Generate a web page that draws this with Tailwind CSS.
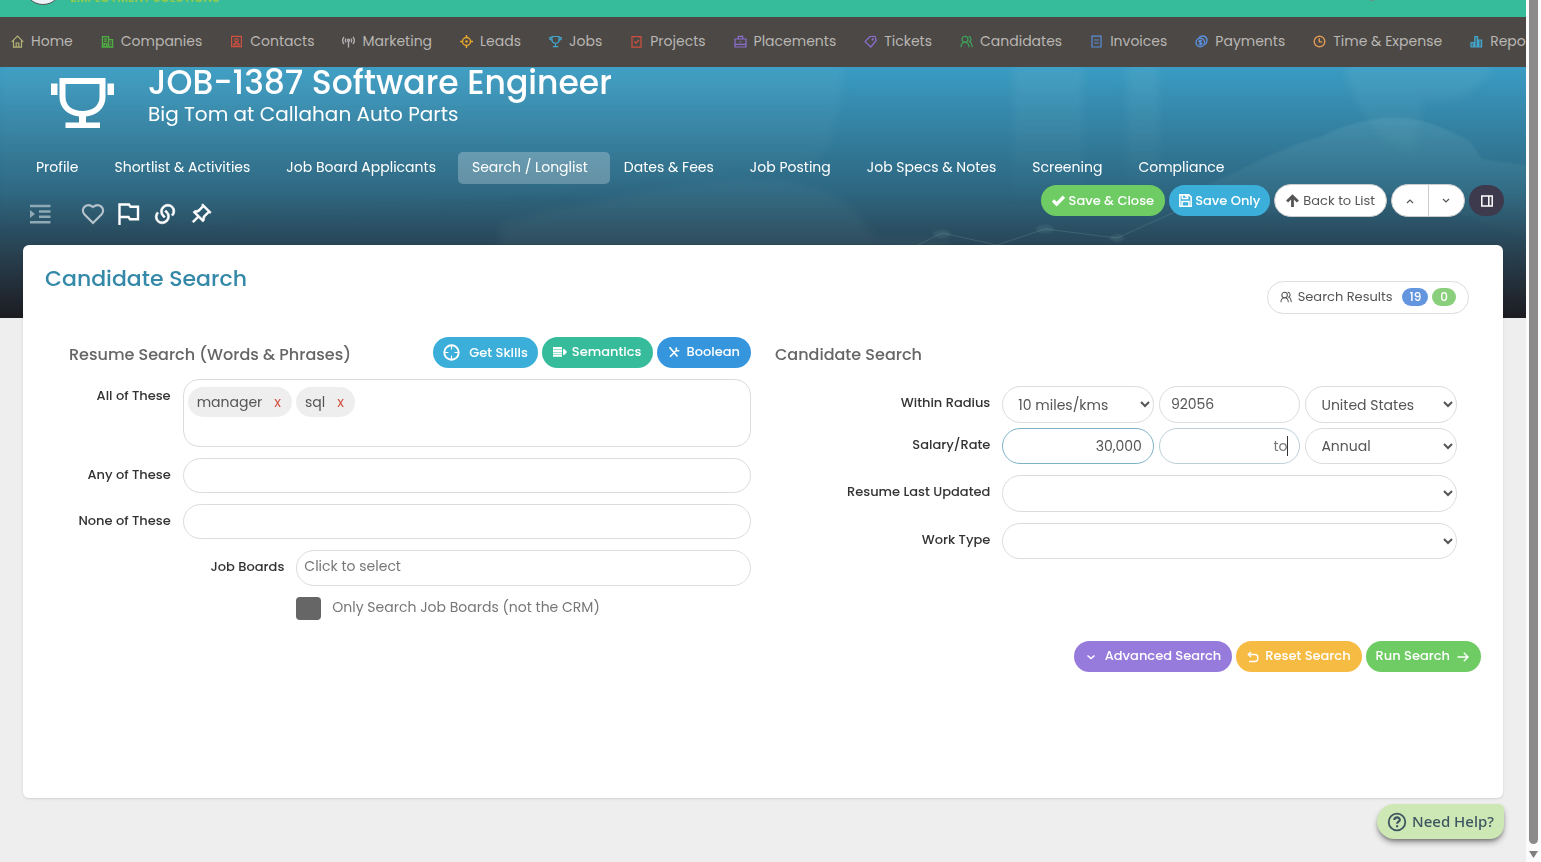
<!DOCTYPE html>
<html lang="en">
  <head>
    <meta charset="UTF-8" />
    <meta name="viewport" content="width=device-width, initial-scale=1.0" />
    <title>JOB-1387 Software Engineer</title>
    <script src="https://cdn.jsdelivr.net/npm/@tailwindcss/browser@4"></script>
  </head>
  <body class="bg-[#eeeeee] font-[Poppins,Inter,sans-serif] text-[#555555]">
    <div class="flex min-h-screen">
      <div class="relative min-w-0 flex-1">
        <!-- Top bar, mostly scrolled out of view -->
        <header class="relative h-[17px] overflow-hidden bg-[#36bc9b]">
          <div class="absolute -top-[33px] left-[24px] h-[38px] w-[38px] rounded-full border border-[#555555] bg-[#eef1f6]"></div>
          <div class="absolute -top-[10px] left-[70px] text-xs leading-4 font-semibold text-[#8fcb4f]">EMPLOYMENT SOLUTIONS</div>
          <div class="absolute -top-[9px] right-[149px] h-[10px] w-[10px] rounded-full bg-[#6b8f84]"></div>
        </header>

        <nav class="flex h-[50px] items-center gap-7 overflow-hidden bg-[#4b4845] pb-[2px] pl-[11px] text-sm whitespace-nowrap text-[#b9b6b3]">
          <a href="#" class="flex items-center gap-[7px]">
            <svg class="h-[13px] w-[13px] shrink-0 text-[#b5b276]" viewBox="0 0 13 13" fill="none" stroke="currentColor" stroke-width="1.2"><path d="M.7 6.8 6.5 1l5.8 5.8M2.5 5.5v6.7h8V5.5M5.2 12V8h2.6v4" /></svg>
            Home</a>
          <a href="#" class="flex items-center gap-[7px]">
            <svg class="h-[13px] w-[13px] shrink-0 text-[#4fae43]" viewBox="0 0 13 13" fill="none" stroke="currentColor" stroke-width="1.4"><path d="M1.5 12V1.6h6V12M7.5 4.6h4V12M.5 12h12M3.2 4h2.6M3.2 6.3h2.6M3.2 12V8.8h2.5V12M9.5 6.5v1M9.5 9v1" /></svg>
            Companies</a>
          <a href="#" class="flex items-center gap-[7px]">
            <svg class="h-[13px] w-[13px] shrink-0 text-[#d2503f]" viewBox="0 0 13 13" fill="none" stroke="currentColor" stroke-width="1.2"><path d="M1.6 1.4h9.8v10.2H1.6zM3.6 10c.3-1.8 1.5-2.2 2.9-2.2s2.6.4 2.9 2.2z" /><circle cx="6.5" cy="5.2" r="1.7" /></svg>
            Contacts</a>
          <a href="#" class="flex items-center gap-[7px]">
            <svg class="h-[13px] w-[13px] shrink-0 text-[#b0aeb0]" viewBox="0 0 13 13" fill="none" stroke="currentColor" stroke-width="1.4"><path d="M2 2C.4 4 .4 7 2 9M4 3.500c-.8 1.300-.8 2.700 0 4M11 2c1.600 2 1.600 5 0 7M9 3.500c.8 1.300.8 2.700 0 4M6.500 6v6.500" /><circle cx="6.5" cy="5.3" r="1" /></svg>
            Marketing</a>
          <a href="#" class="flex items-center gap-[7px]">
            <svg class="h-[13px] w-[13px] shrink-0 text-[#e9a62c]" viewBox="0 0 13 13" fill="none" stroke="currentColor" stroke-width="1.4"><circle cx="6.5" cy="6.5" r="4" /><circle cx="6.5" cy="6.5" r=".6" /><path d="M6.500 0v3M6.500 10v3M0 6.500h3M10 6.500h3" /></svg>
            Leads</a>
          <a href="#" class="flex items-center gap-[7px]">
            <svg class="h-[13px] w-[13px] shrink-0 text-[#43a6cd]" viewBox="0 0 13 13" fill="none" stroke="currentColor" stroke-width="1.2"><path d="M3 1.500h7v3.300a3.500 3.500 0 0 1-7 0zM3 2.600H.8v1.500L3 5.600M10 2.600h2.200v1.500L10 5.600M6.500 8.300v3M3.800 11.600h5.400" /></svg>
            Jobs</a>
          <a href="#" class="flex items-center gap-[7px]">
            <svg class="h-[13px] w-[13px] shrink-0 text-[#d2503f]" viewBox="0 0 13 13" fill="none" stroke="currentColor" stroke-width="1.2"><path d="M2 1.500h9v10.600H2zM4.300 6.500l1.700 1.700 3-3.200M4 1.500v1.300M9 1.500v1.300" /></svg>
            Projects</a>
          <a href="#" class="flex items-center gap-[7px]">
            <svg class="h-[13px] w-[13px] shrink-0 text-[#8c6fd0]" viewBox="0 0 13 13" fill="none" stroke="currentColor" stroke-width="1.2"><path d="M1 4h11v8H1zM4.300 4V1.300h4.400V4M1 9.300h11M5.500 7h2" /></svg>
            Placements</a>
          <a href="#" class="flex items-center gap-[7px]">
            <svg class="h-[13px] w-[13px] shrink-0 text-[#8c6fd0]" viewBox="0 0 13 13" fill="none" stroke="currentColor" stroke-width="1.2"><path d="M1 6.600 6 1.500l5-.2 1.200 4.200L6.800 12z" stroke-linejoin="round" /><circle cx="8.7" cy="4.4" r=".6" /></svg>
            Tickets</a>
          <a href="#" class="flex items-center gap-[7px]">
            <svg class="h-[13px] w-[13px] shrink-0 text-[#3fa45b]" viewBox="0 0 13 13" fill="none" stroke="currentColor" stroke-width="1.2"><circle cx="5" cy="4.3" r="3" /><path d="M1 12.300c0-3 1.500-5 4-5s4 2 4 5M8.500 1.300c2.800.2 3.300 4 1 5.400 1.700.7 2.600 2.600 2.700 5.600" /></svg>
            Candidates</a>
          <a href="#" class="flex items-center gap-[7px]">
            <svg class="h-[13px] w-[13px] shrink-0 text-[#5b8fdb]" viewBox="0 0 13 13" fill="none" stroke="currentColor" stroke-width="1.2"><path d="M2 1.200h9v10.800H2zM4.200 5h4.600M4.200 8h4.600" /></svg>
            Invoices</a>
          <a href="#" class="flex items-center gap-[7px]">
            <svg class="h-[13px] w-[13px] shrink-0 text-[#5b8fdb]" viewBox="0 0 13 13" fill="none" stroke="currentColor" stroke-width="1.4"><circle cx="5.3" cy="7.5" r="4.3" /><path d="M4 2.500C7-.3 12 1 12 5.500c0 2-1 3.600-2.500 4.500M7 6c-1-.8-3-.6-3 .5s3 .9 3 2-2 1.300-3 .5M5.500 5v5.500" /></svg>
            Payments</a>
          <a href="#" class="flex items-center gap-[7px]">
            <svg class="h-[13px] w-[13px] shrink-0 text-[#e09a55]" viewBox="0 0 13 13" fill="none" stroke="currentColor" stroke-width="1.4"><circle cx="6.5" cy="6.5" r="5.3" /><path d="M6.300 3.200v3.700h3" /></svg>
            Time &amp; Expense</a>
          <a href="#" class="flex items-center gap-[7px]">
            <svg class="h-[13px] w-[13px] shrink-0 text-[#43a6cd]" viewBox="0 0 13 13" fill="#43a6cd66" stroke="currentColor" stroke-width="1.2"><path d="M1 7.500h2.800V12H1zM4.800 1.500h2.800V12H4.800zM8.600 5h3v7h-3z" /></svg>
            Reports</a>
        </nav>

        <section class="relative h-[251px] bg-linear-to-b from-[#3a9cc4] via-[#2d6680] via-50% to-[#1c1c22]">
          <!-- Faint skyline, hands and network behind the title -->
          <svg class="absolute inset-0 h-full w-full" viewBox="0 0 1526 251" preserveAspectRatio="none" fill="#a7dcdc">
            <defs>
              <linearGradient id="fade" x1="0" y1="0" x2="0" y2="1">
                <stop offset="0" stop-color="#a7dcdc" />
                <stop offset="1" stop-color="#a7dcdc" stop-opacity="0" />
              </linearGradient>
            </defs>
            <g class="blur-xs">
              <path d="M0 0H843C840 60 830 90 805 100C700 110 300 160 0 170z" fill="url(#fade)" opacity=".08" />
              <path d="M1013 0h70v140h-70zM1127 0h32v130h-32zM1344 0h150c-20 30-50 40-70 30l-10 60c-40-20-60-50-70-90z" fill="url(#fade)" opacity=".1" />
              <path d="M500 155c100-20 240-60 310-35 40 10 50 30 65 50l75 2v10H500z" opacity=".05" />
            </g>
            <path class="blur-[1px]" d="M1190 125c50-20 90-45 130-55 30-16 80-30 125-8l25 12 12 18 44 6v80c-90-50-160-60-210-50-40 30-90 20-126 3z" fill="url(#fade)" opacity=".12" />
            <g fill="none" stroke="#a7dcdc" opacity=".16"><path d="M910 182l32-16 55 12 48-16 72 9 80-36" /></g>
            <g class="blur-[1px]" opacity=".1"><ellipse cx="942" cy="167" rx="9" ry="4" /><ellipse cx="1117" cy="171" rx="7" ry="4" /><ellipse cx="1045" cy="162" rx="9" ry="4" /></g>
          </svg>

          <div class="relative flex items-start gap-[34px] pl-[51px]">
            <svg class="mt-[10px] h-[52px] w-[63px]" viewBox="0 0 63 52" fill="white">
              <path d="M8.500 1H54.500V20C54.500 31 46 38.500 35 39.500V45.500H49V51H14.500V45.500H28V39.500C17 38.500 8.500 31 8.500 20zM14.500 7V20C14.500 29 22 34 31.500 34S48.500 29 48.500 20V7z" fill-rule="evenodd" />
              <path d="M0 6.500h6.500V18H0zM56.500 6.500H63V18h-6.500z" />
            </svg>
            <div class="text-white">
              <h1 class="text-[33px] leading-8 font-medium">JOB-1387 Software Engineer</h1>
              <p class="text-xl leading-[30px]">Big Tom at Callahan Auto Parts</p>
            </div>
          </div>

          <div class="relative mt-[23px] flex pl-[22px] text-sm leading-[30px] whitespace-nowrap text-white">
            <a href="#" class="h-8 pr-[22px] pl-[14px]">Profile</a>
            <a href="#" class="h-8 pr-[22px] pl-[14px]">Shortlist &amp; Activities</a>
            <a href="#" class="h-8 pr-[22px] pl-[14px]">Job Board Applicants</a>
            <a href="#" class="h-8 rounded-[5px] bg-white/25 pr-[22px] pl-[14px]">Search / Longlist</a>
            <a href="#" class="h-8 pr-[22px] pl-[14px]">Dates &amp; Fees</a>
            <a href="#" class="h-8 pr-[22px] pl-[14px]">Job Posting</a>
            <a href="#" class="h-8 pr-[22px] pl-[14px]">Job Specs &amp; Notes</a>
            <a href="#" class="h-8 pr-[22px] pl-[14px]">Screening</a>
            <a href="#" class="h-8 pr-[22px] pl-[14px]">Compliance</a>
          </div>

          <div class="relative flex items-start justify-between pr-[22px] pl-[29px] text-[13px]">
            <div class="flex items-center gap-3 pt-[18px] text-white">
              <button type="button" aria-label="Toggle outline" class="mr-[18px] text-[#8fa9b5]">
                <svg class="h-6 w-[22px]" viewBox="0 0 22 24" fill="currentColor"><path d="M1 2.800h20.500V5.300H1zM10 8.300h11.500v2.500H10zM10 13.500h11.500V16H10zM1 19h20.500v2.500H1zM1 8v8l5-4z" /></svg>
              </button>
              <button type="button" aria-label="Favourite" class="text-[#b5c4cc]">
                <svg class="h-6 w-6" viewBox="0 0 24 24" fill="none" stroke="currentColor" stroke-width="2.2"><path d="M12 21 3.600 12.600c-5-6 2.400-12.600 8.400-7.600C18 0 25.400 6.600 20.400 12.600z" /></svg>
              </button>
              <button type="button" aria-label="Flag">
                <svg class="h-6 w-6" viewBox="0 0 24 24" fill="none" stroke="currentColor" stroke-width="2.4"><path d="M2.500 23V2.500h9.500l1.500 2.300h7.500v12.500h-8L11.500 15H2.500" /></svg>
              </button>
              <button type="button" aria-label="Link">
                <svg class="h-6 w-6" viewBox="0 0 24 24" fill="currentColor" stroke="currentColor" stroke-width=".6"><path d="M13.060 8.110l1.415 1.415a7 7 0 0 1 0 9.900l-.354.353a7 7 0 0 1-9.900-9.900l1.415 1.415a5 5 0 1 0 7.071 7.071l.354-.354a5 5 0 0 0 0-7.070l-1.415-1.415 1.414-1.415zm6.718 6.011l-1.414-1.414a5 5 0 1 0-7.071-7.071l-.354.354a5 5 0 0 0 0 7.070l1.415 1.415-1.415 1.414-1.414-1.414a7 7 0 0 1 0-9.900l.354-.353a7 7 0 0 1 9.900 9.900z" /></svg>
              </button>
              <button type="button" aria-label="Pin">
                <svg class="h-6 w-6" viewBox="0 0 24 24" fill="currentColor" stroke="currentColor" stroke-width=".6"><path d="M13.828 1.686l8.486 8.486-1.415 1.414-.707-.707-4.242 4.242-.707 3.536-1.415 1.414-4.242-4.243-4.950 4.950-1.414-1.414 4.950-4.950-4.243-4.242 1.414-1.415 3.536-.707 4.242-4.242-.707-.707 1.414-1.415zm.708 3.536l-4.671 4.670-2.822.565 6.500 6.500.564-2.822 4.671-4.670-4.242-4.243z" /></svg>
              </button>
            </div>
            <div class="flex items-center gap-1">
              <button type="button" class="flex h-[31px] items-center gap-1 rounded-full bg-[#6fcb63] px-[11px] font-medium text-white">
                <svg class="h-[13px] w-[13px]" viewBox="0 0 12 12" fill="none" stroke="currentColor" stroke-width="3"><path d="m1 6 3.300 3.300L11 2.500" /></svg>
                Save &amp; Close
              </button>
              <button type="button" class="flex h-[31px] items-center gap-[3px] rounded-full bg-[#3bafda] px-[10px] font-medium text-white">
                <svg class="h-[13px] w-[13px]" viewBox="0 0 12 12" fill="none" stroke="currentColor" stroke-width="1.4"><path d="M.8.8h8.400l2 2v8.400H.8zM3 .8v3.400h5V.8M2.800 11V7h6.400v4M6.500 1v2" /></svg>
                Save Only
              </button>
              <button type="button" class="flex h-[33px] items-center gap-1 rounded-full border border-[#cccccc] bg-white px-[11px]">
                <svg class="h-[13px] w-[13px]" viewBox="0 0 12 12" fill="none" stroke="currentColor" stroke-width="2.6"><path d="M6 12V2M1 7l5-5 5 5" /></svg>
                Back to List
              </button>
              <div class="flex h-[33px] w-[74px] overflow-hidden rounded-full border border-[#cccccc] bg-white">
                <button type="button" aria-label="Previous" class="flex flex-1 items-center justify-center border-r border-[#cccccc]">
                  <svg class="h-2 w-2" viewBox="0 0 8 8" fill="none" stroke="currentColor" stroke-width="1.2"><path d="m1 6 3-3 3 3" /></svg>
                </button>
                <button type="button" aria-label="Next" class="flex flex-1 items-center justify-center">
                  <svg class="h-2 w-2" viewBox="0 0 8 8" fill="none" stroke="currentColor" stroke-width="1.2"><path d="m1 2 3 3 3-3" /></svg>
                </button>
              </div>
              <button type="button" aria-label="Side panel" class="flex h-[31px] w-[35px] items-center justify-center rounded-full bg-[#3c3a4c] text-white">
                <svg class="h-3 w-3" viewBox="0 0 12 12" fill="none" stroke="currentColor" stroke-width="1.5"><path d="M.8 1h10.400v10H.8zM7.800 1v10" /></svg>
              </button>
            </div>
          </div>
        </section>

        <main class="relative mx-[23px] -mt-[73px] min-h-[553px] rounded-md bg-white px-[22px] pt-[19px] shadow">
          <div class="flex items-start justify-between pr-3">
            <h2 class="text-[22px] leading-[30px] font-medium text-[#3488a8]">Candidate Search</h2>
            <button type="button" class="mt-[17px] flex h-[33px] items-center rounded-full border border-[#dddddd] px-3 pb-[2px] text-[13px]">
              <svg class="mr-[6px] h-3 w-3" viewBox="0 0 13 13" fill="none" stroke="currentColor" stroke-width="1.1"><circle cx="5" cy="4.3" r="3" /><path d="M1 12.300c0-3 1.500-5 4-5s4 2 4 5M8.500 1.300c2.800.2 3.300 4 1 5.400 1.700.7 2.600 2.600 2.700 5.600" /></svg>
              Search Results
              <span class="ml-[10px] rounded-full bg-[#6495df] px-[7px] text-xs leading-[18px] font-medium text-white">19</span>
              <span class="ml-1 rounded-full bg-[#8acf7b] px-[8px] text-xs leading-[18px] font-medium text-white">0</span>
            </button>
          </div>

          <form>
            <div class="mt-[23px] grid grid-cols-2 gap-6 px-6">
              <div>
                <div class="flex h-8 items-start justify-between">
                  <h3 class="pt-[6px] text-base leading-6 font-medium text-[#666666]">Resume Search (Words &amp; Phrases)</h3>
                  <div class="flex gap-1 text-[13px] font-medium text-white">
                    <button type="button" class="flex h-[31px] items-center gap-[9px] rounded-full bg-[#3bafda] px-[10px]">
                      <svg class="h-[17px] w-[17px]" viewBox="0 0 17 17" fill="none" stroke="currentColor" stroke-width="1.9"><circle cx="8.5" cy="8.5" r="7.2" /><path d="M8.500 1v4.500M8.500 11.500V16M1 8.500h4.500M11.500 8.500H16" stroke-width="1.2" /></svg>
                      Get Skills
                    </button>
                    <button type="button" class="flex h-[31px] items-center gap-[5px] rounded-full bg-[#36bc9b] px-[11px] pb-[2px]">
                      <svg class="h-3 w-[14px]" viewBox="0 0 14 12" fill="currentColor"><path d="M0 1h9v2.200H0zM0 3.700h9v2.200H0zM0 6.400h9v2.200H0zM0 9.100h9v1.600H0zM10 3l2 .5 2 2.500-2 2.500-2 .5z" /></svg>
                      Semantics
                    </button>
                    <button type="button" class="flex h-[31px] items-center gap-[7px] rounded-full bg-[#3696dd] px-[11px] pb-[2px]">
                      <svg class="h-3 w-3" viewBox="0 0 12 12" fill="none" stroke="currentColor" stroke-width="1.6"><path d="m2.500 2.500 7 8M8.800 4 2 10.800M1.200 1.800l2 .2M8.300 1.500v3l3 .2" /></svg>
                      Boolean
                    </button>
                  </div>
                </div>

                <div class="mt-[10px] grid grid-cols-6 text-sm">
                  <label for="all-words" class="pt-[7px] pr-3 text-right text-[13px] leading-5 font-medium whitespace-nowrap text-[#333333]">All of These</label>
                  <div class="col-span-5 flex h-[68px] items-start gap-1 rounded-2xl border border-[#dcdcdc] px-1 pt-[7px]">
                    <span class="flex h-[30px] items-center gap-3 rounded-full bg-[#eeeeee] pr-[11px] pl-[9px]">manager <button type="button" aria-label="Remove manager" class="text-[#d2503f]">x</button></span>
                    <span class="flex h-[30px] items-center gap-3 rounded-full bg-[#eeeeee] pr-[11px] pl-[9px]">sql <button type="button" aria-label="Remove sql" class="text-[#d2503f]">x</button></span>
                    <input id="all-words" type="text" class="h-[30px] min-w-0 flex-1 outline-none" />
                  </div>
                </div>
                <div class="mt-[11px] grid grid-cols-6 text-sm">
                  <label for="any-words" class="pt-[7px] pr-3 text-right text-[13px] leading-5 font-medium whitespace-nowrap text-[#333333]">Any of These</label>
                  <input id="any-words" type="text" class="col-span-5 h-[35px] rounded-full border border-[#dcdcdc] px-3" />
                </div>
                <div class="mt-[11px] grid grid-cols-6 text-sm">
                  <label for="no-words" class="pt-[7px] pr-3 text-right text-[13px] leading-5 font-medium whitespace-nowrap text-[#333333]">None of These</label>
                  <input id="no-words" type="text" class="col-span-5 h-[35px] rounded-full border border-[#dcdcdc] px-3" />
                </div>
                <div class="mt-[11px] grid grid-cols-3 text-sm">
                  <label for="job-boards" class="pt-[7px] pr-3 text-right text-[13px] leading-5 font-medium text-[#333333]">Job Boards</label>
                  <input id="job-boards" type="text" placeholder="Click to select" class="col-span-2 h-9 rounded-full border border-[#dcdcdc] px-[7px] pb-1 placeholder:text-[#777777]" />
                </div>
                <div class="mt-[11px] grid grid-cols-3">
                  <div class="col-span-2 col-start-2 flex items-start gap-[11px]">
                    <input id="boards-only" type="checkbox" class="h-[23px] w-[25px] appearance-none rounded-sm bg-[#666666]" />
                    <label for="boards-only" class="text-sm text-[#777777]">Only Search Job Boards (not the CRM)</label>
                  </div>
                </div>
              </div>

              <div>
                <h3 class="h-8 pt-[6px] text-base leading-6 font-medium text-[#666666]">Candidate Search</h3>
                <div class="mt-[17px] grid grid-cols-3 text-sm">
                  <label for="radius" class="pt-[7px] pr-3 text-right text-[13px] leading-5 font-medium text-[#333333]">Within Radius</label>
                  <div class="col-span-2 grid grid-cols-3">
                    <select id="radius" class="h-[37px] rounded-full border border-[#dcdcdc] bg-white pr-1 pl-[11px]">
                      <option>10 miles/kms</option>
                    </select>
                    <input type="text" aria-label="Zip code" value="92056" class="mx-[5px] h-[37px] min-w-0 rounded-full border border-[#dcdcdc] px-[11px]" />
                    <select aria-label="Country" class="h-[37px] rounded-full border border-[#dcdcdc] bg-white pr-1 pl-[11px]">
                      <option>United States</option>
                    </select>
                  </div>
                </div>
                <div class="mt-[5px] grid grid-cols-3 text-sm">
                  <label for="salary" class="pt-[7px] pr-3 text-right text-[13px] leading-5 font-medium text-[#333333]">Salary/Rate</label>
                  <div class="col-span-2 grid grid-cols-3">
                    <input id="salary" type="text" value="30,000" class="h-9 min-w-0 rounded-full border border-[#7db3c8] px-[11px] text-right" />
                    <div class="relative mx-[5px]">
                      <input type="text" aria-label="Salary to" placeholder="to" class="h-9 w-full rounded-full border border-[#bccfd9] px-3 text-right placeholder:text-[#777777]" />
                      <span class="absolute top-2 right-3 h-5 w-px bg-[#333333]"></span>
                    </div>
                    <select aria-label="Salary period" class="h-9 rounded-full border border-[#dcdcdc] bg-white pr-1 pl-[11px]">
                      <option>Annual</option>
                    </select>
                  </div>
                </div>
                <div class="mt-[11px] grid grid-cols-3 text-sm">
                  <label for="updated" class="pt-[7px] pr-3 text-right text-[13px] leading-5 font-medium text-[#333333]">Resume Last Updated</label>
                  <select id="updated" class="col-span-2 h-[37px] rounded-full border border-[#dcdcdc] bg-white pr-1 pl-[11px]">
                    <option></option>
                  </select>
                </div>
                <div class="mt-[11px] grid grid-cols-3 text-sm">
                  <label for="work-type" class="pt-[7px] pr-3 text-right text-[13px] leading-5 font-medium text-[#333333]">Work Type</label>
                  <select id="work-type" class="col-span-2 h-9 rounded-full border border-[#dcdcdc] bg-white pr-1 pl-[11px]">
                    <option></option>
                  </select>
                </div>
              </div>
            </div>

            <div class="mt-[21px] flex justify-end gap-1 text-[13px] font-medium text-white">
              <button type="button" class="flex h-[31px] items-center gap-2 rounded-full bg-[#967adc] px-[11px] pb-[2px]">
                <svg class="mt-[2px] h-3 w-3" viewBox="0 0 12 12" fill="none" stroke="currentColor" stroke-width="1.5"><path d="m2.500 4.500 3.500 3 3.500-3" /></svg>
                Advanced Search
              </button>
              <button type="reset" class="flex h-[31px] items-center gap-[6px] rounded-full bg-[#f6bb42] px-[11px] pb-[2px]">
                <svg class="mt-[2px] h-3 w-3" viewBox="0 0 12 12" fill="none" stroke="currentColor" stroke-width="1.4"><path d="M4 1 1.300 3.500 4 6M1.500 3.500H8c3.800 0 3.800 7 0 7H2" /></svg>
                Reset Search
              </button>
              <button type="submit" class="flex h-[31px] items-center gap-[7px] rounded-full bg-[#6fcb63] pr-3 pb-[2px] pl-[10px]">
                Run Search
                <svg class="mt-[2px] h-3 w-3" viewBox="0 0 12 12" fill="none" stroke="currentColor" stroke-width="1.4"><path d="M.5 6h10.500M6.800 1.800 11 6l-4.200 4.200" /></svg>
              </button>
            </div>
          </form>
        </main>

        <button type="button" class="absolute right-[22px] bottom-[23px] flex h-[35px] items-center gap-[5px] rounded-l-[20px] rounded-tr-md rounded-br-2xl bg-[#cde8b5] px-[10px] font-['Noto_Sans','Open_Sans',sans-serif] text-[15px] font-medium text-[#3d5560] shadow-md shadow-black/40">
          <svg class="h-5 w-5" viewBox="0 0 20 20" fill="none" stroke="currentColor" stroke-width="1.8"><circle cx="10" cy="10" r="8.3" /><path d="M7.300 8c.2-3.400 5.500-3.300 5.500-.2 0 1.900-2.600 1.900-2.700 4" stroke-width="2.2" /><path d="M9 13.300h2.200v1.900H9z" fill="currentColor" stroke="none" /></svg>
          Need Help?
        </button>
      </div>

      <!-- Scrollbar -->
      <div class="flex w-[15px] shrink-0 flex-col items-center gap-[7px] bg-[#fcfcfc] pb-[4px]">
        <div class="w-[9px] flex-1 rounded-b-full bg-[#8b8b8b]"></div>
        <svg class="h-[7px] w-[9px]" viewBox="0 0 9 7" fill="#7f7f7f"><path d="M0 0h9L4.500 7z" /></svg>
      </div>
    </div>
  </body>
</html>
